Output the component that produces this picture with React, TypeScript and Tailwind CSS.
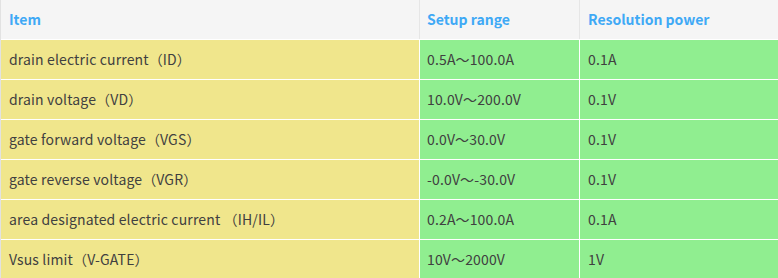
const rows: [string, string, string][] = [
  ['drain electric current（ID）', '0.5A～100.0A', '0.1A'],
  ['drain voltage（VD）', '10.0V～200.0V', '0.1V'],
  ['gate forward voltage（VGS）', '0.0V～30.0V', '0.1V'],
  ['gate reverse voltage（VGR）', '-0.0V～-30.0V', '0.1V'],
  ['area designated electric current （IH/IL）', '0.2A～100.0A', '0.1A'],
  ['Vsus limit（V-GATE）', '10V～2000V', '1V'],
]

export default function App() {
  return (
    <div
      className="w-[778px] h-[278px] overflow-hidden bg-white text-[14px] text-[#404040]"
      style={{ fontFamily: '"Noto Sans CJK JP", "Noto Sans", sans-serif' }}
    >
      <div className="border-l border-[#e2e2e2]">
        {/* header */}
        <div className="flex h-[40px] bg-[#f5f5f5] border-b border-white font-bold text-[#3fa9f5]">
          <div className="w-[419px] border-r border-[#e6e6e6] flex items-center pl-[8px]">Item</div>
          <div className="w-[160px] border-r border-[#e6e6e6] flex items-center pl-[7px]">Setup range</div>
          <div className="flex-1 flex items-center pl-[8px]">Resolution power</div>
        </div>
        {rows.map(([item, range, res]) => (
          <div key={item} className="flex h-[40px] border-b border-white tracking-[0.15px]">
            <div className="w-[419px] bg-[#f0e68c] border-r border-white flex items-center pl-[8px]">{item}</div>
            <div className="w-[160px] bg-[#90ee90] border-r border-white flex items-center pl-[7px]">{range}</div>
            <div className="flex-1 bg-[#90ee90] flex items-center pl-[8px]">{res}</div>
          </div>
        ))}
      </div>
    </div>
  )
}
